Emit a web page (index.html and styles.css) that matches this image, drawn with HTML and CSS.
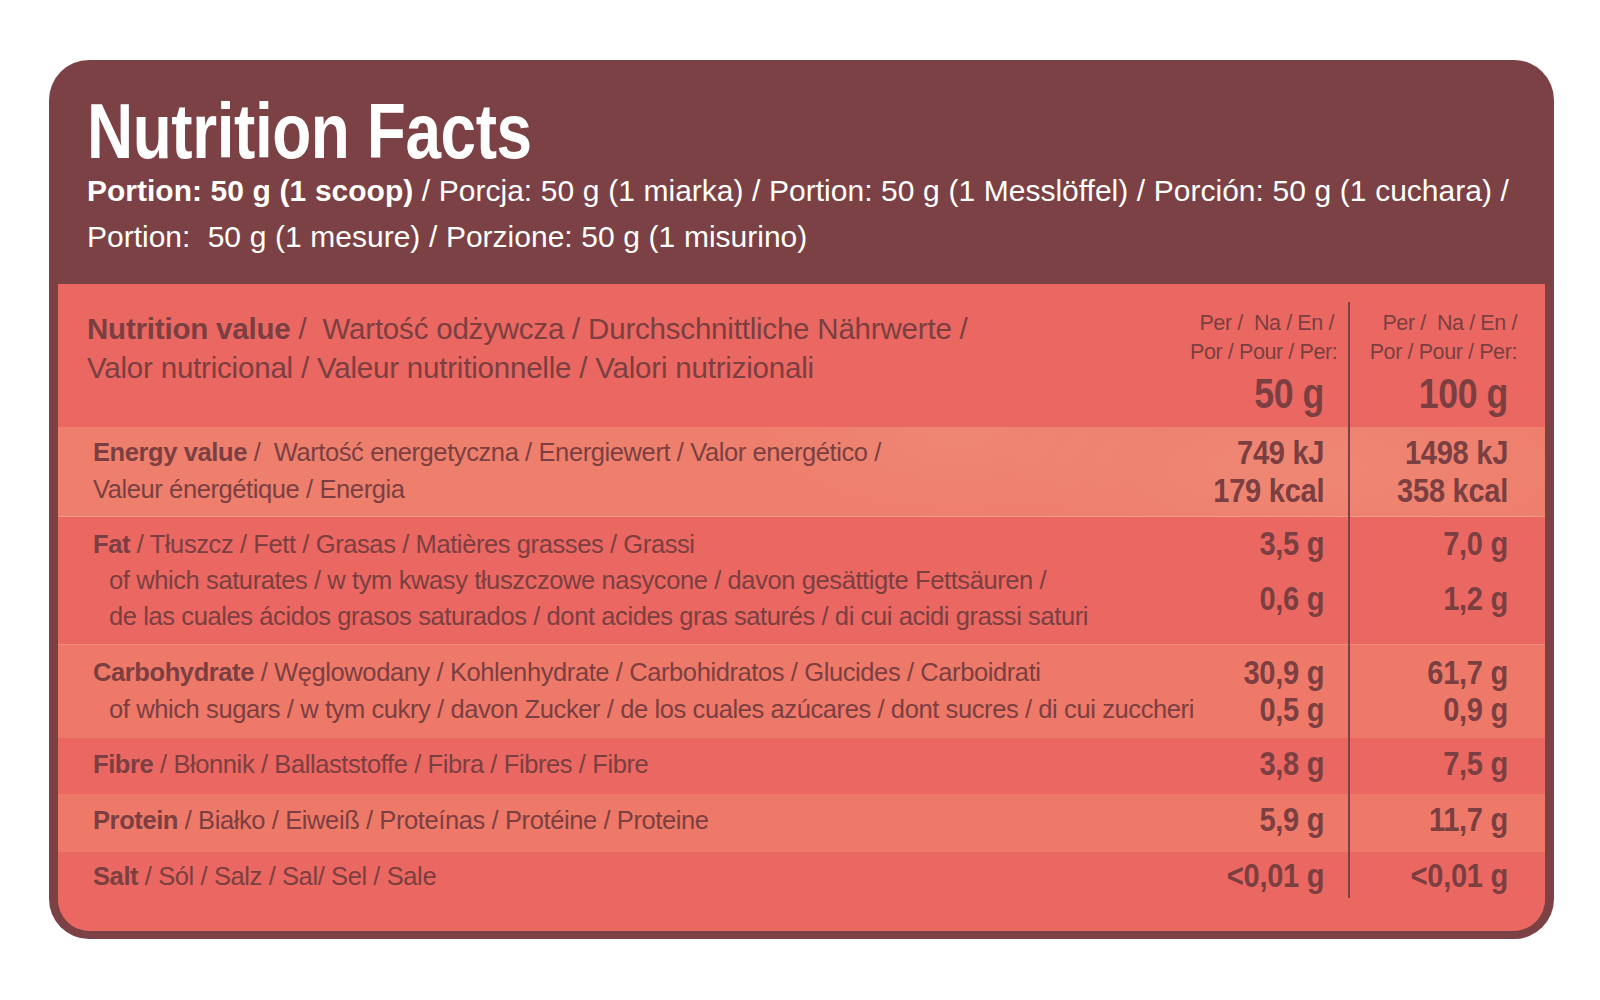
FILE: index.html
```html
<!DOCTYPE html>
<html lang="en">
<head>
<meta charset="utf-8">
<title>Nutrition Facts</title>
<link rel="stylesheet" href="styles.css">
</head>
<body>
<div class="card">
  <header class="head">
    <h1 class="title"><span class="title-text">Nutrition Facts</span></h1>
    <p class="portion"><b>Portion: 50 g (1 scoop)</b> / Porcja: 50 g (1 miarka) / Portion: 50 g (1 Messlöffel) / Porción: 50 g (1 cuchara) /<br>Portion:&nbsp; 50 g (1 mesure) / Porzione: 50 g (1 misurino)</p>
  </header>
  <div class="table">
    <div class="divider"></div>

    <div class="row row-head">
      <div class="label head-label"><b>Nutrition value</b> /&nbsp; Wartość odżywcza / Durchschnittliche Nährwerte /<br>Valor nutricional / Valeur nutritionnelle / Valori nutrizionali</div>
      <div class="hcell c1"><div class="per">Per /&nbsp; Na / En /<br>Por / Pour / Per:</div><div class="qty">50 g</div></div>
      <div class="hcell c2"><div class="per">Per /&nbsp; Na / En /<br>Por / Pour / Per:</div><div class="qty">100 g</div></div>
    </div>

    <div class="row row-energy">
      <div class="label"><b>Energy value</b> /&nbsp; Wartość energetyczna / Energiewert / Valor energético /<br>Valeur énergétique / Energia</div>
      <div class="val c1">749 kJ<br>179 kcal</div>
      <div class="val c2">1498 kJ<br>358 kcal</div>
    </div>

    <div class="row row-fat">
      <div class="label"><b>Fat</b> / Tłuszcz / Fett / Grasas / Matières grasses / Grassi<div class="sub">of which saturates / w tym kwasy tłuszczowe nasycone / davon gesättigte Fettsäuren /<br>de las cuales ácidos grasos saturados / dont acides gras saturés / di cui acidi grassi saturi</div></div>
      <div class="val c1"><div>3,5 g</div><div class="val-gap">0,6 g</div></div>
      <div class="val c2"><div>7,0 g</div><div class="val-gap">1,2 g</div></div>
    </div>

    <div class="row row-carb">
      <div class="label"><b>Carbohydrate</b> / Węglowodany / Kohlenhydrate / Carbohidratos / Glucides / Carboidrati<div class="sub">of which sugars / w tym cukry / davon Zucker / de los cuales azúcares / dont sucres / di cui zuccheri</div></div>
      <div class="val c1">30,9 g<br>0,5 g</div>
      <div class="val c2">61,7 g<br>0,9 g</div>
    </div>

    <div class="row row-fibre">
      <div class="label"><b>Fibre</b> / Błonnik / Ballaststoffe / Fibra / Fibres / Fibre</div>
      <div class="val c1">3,8 g</div>
      <div class="val c2">7,5 g</div>
    </div>

    <div class="row row-protein">
      <div class="label"><b>Protein</b> / Białko / Eiweiß / Proteínas / Protéine / Proteine</div>
      <div class="val c1">5,9 g</div>
      <div class="val c2">11,7 g</div>
    </div>

    <div class="row row-salt">
      <div class="label"><b>Salt</b> / Sól / Salz / Sal/ Sel / Sale</div>
      <div class="val c1">&lt;0,01 g</div>
      <div class="val c2">&lt;0,01 g</div>
    </div>
  </div>
</div>
</body>
</html>
```

FILE: styles.css
```css
* { box-sizing: border-box; }

html, body {
  margin: 0;
  padding: 0;
  background: #ffffff;
}

body {
  font-family: "Liberation Sans Narrow", "Liberation Sans", Arial, sans-serif;
  color: #7b3f42;
}

.card {
  margin: 60px 0 0 49px;
  width: 1505px;
  height: 879px;
  background: #7b4144;
  border-radius: 40px;
  padding: 0 9px 8px 9px;
  display: flex;
  flex-direction: column;
}

.head {
  height: 224px;
  padding: 34px 0 0 29px;
  color: #ffffff;
  flex: none;
}

.title {
  margin: 0;
  font-size: 77px;
  line-height: 74px;
  font-weight: bold;
  white-space: nowrap;
}

.title-text {
  display: inline-block;
  transform: scaleX(0.83);
  transform-origin: 0 50%;
  letter-spacing: -0.5px;
}

.portion {
  margin: 0;
  font-size: 30px;
  line-height: 46px;
  white-space: nowrap;
  word-spacing: 0.3px;
}

.table {
  flex: 1;
  position: relative;
  background: #ea6861;
  border-radius: 0 0 32px 32px;
  overflow: hidden;
}

.divider {
  position: absolute;
  left: 1290px;
  top: 18px;
  bottom: 33px;
  width: 2px;
  background: #7b4144;
  z-index: 1;
}

.row {
  display: grid;
  grid-template-columns: minmax(0, 1fr) 158px 197px;
}

.label {
  min-width: 0;
  padding-left: 35px;
  font-size: 25.5px;
  line-height: 36px;
  letter-spacing: -0.4px;
  white-space: nowrap;
}

.label b { font-weight: bold; }

.sub {
  padding-left: 16px;
}

.val {
  font-size: 33px;
  line-height: 36px;
  font-weight: bold;
  letter-spacing: -0.3px;
  text-align: right;
  white-space: nowrap;
  transform: scaleX(0.88);
  transform-origin: 100% 0;
}

.val.c1 { padding-right: 27px; }
.val.c2 { padding-right: 42px; }

.val-gap { margin-top: 19px; }

/* header row */
.row-head {
  height: 143px;
}

.head-label {
  padding-left: 29px;
  padding-top: 25px;
  font-size: 29.5px;
  line-height: 39px;
  letter-spacing: -0.2px;
}

.hcell {
  text-align: right;
  padding-top: 25px;
}

.hcell.c1 { padding-right: 14px; }
.hcell.c2 { padding-right: 28px; }

.per {
  font-size: 21.5px;
  line-height: 29px;
  letter-spacing: -0.4px;
  white-space: nowrap;
}

.qty {
  margin-top: 3px;
  font-size: 42px;
  line-height: 48px;
  font-weight: bold;
  letter-spacing: -0.5px;
  white-space: nowrap;
  transform: scaleX(0.85);
  transform-origin: 100% 0;
}

.hcell.c1 .qty { margin-right: 10px; }
.hcell.c2 .qty { margin-right: 9px; }

/* data rows */
.row-energy {
  height: 90px;
  padding-top: 7px;
  background:
    radial-gradient(ellipse 420px 140px at 1230px 40px, rgba(255, 255, 255, 0.06), rgba(255, 255, 255, 0) 70%),
    radial-gradient(ellipse 300px 120px at 900px 10px, rgba(255, 255, 255, 0.05), rgba(255, 255, 255, 0) 70%),
    #ee7f6c;
  border-bottom: 1px solid #f39886;
}

.row-energy .label { line-height: 37px; }
.row-energy .val { line-height: 38px; }

.row-fat {
  height: 128px;
  padding-top: 9px;
  background: #ea6861;
  border-bottom: 1px solid #f08c7c;
}

.row-carb {
  height: 93px;
  padding-top: 9px;
  background: #ee7968;
}

.row-carb .label,
.row-carb .val { line-height: 37px; }

.row-fibre {
  height: 56px;
  padding-top: 8px;
  background: #ea6861;
}

.row-protein {
  height: 58px;
  padding-top: 8px;
  background: #ee7968;
}

.row-salt {
  height: 80px;
  padding-top: 6px;
  background: #ea6861;
}
```
